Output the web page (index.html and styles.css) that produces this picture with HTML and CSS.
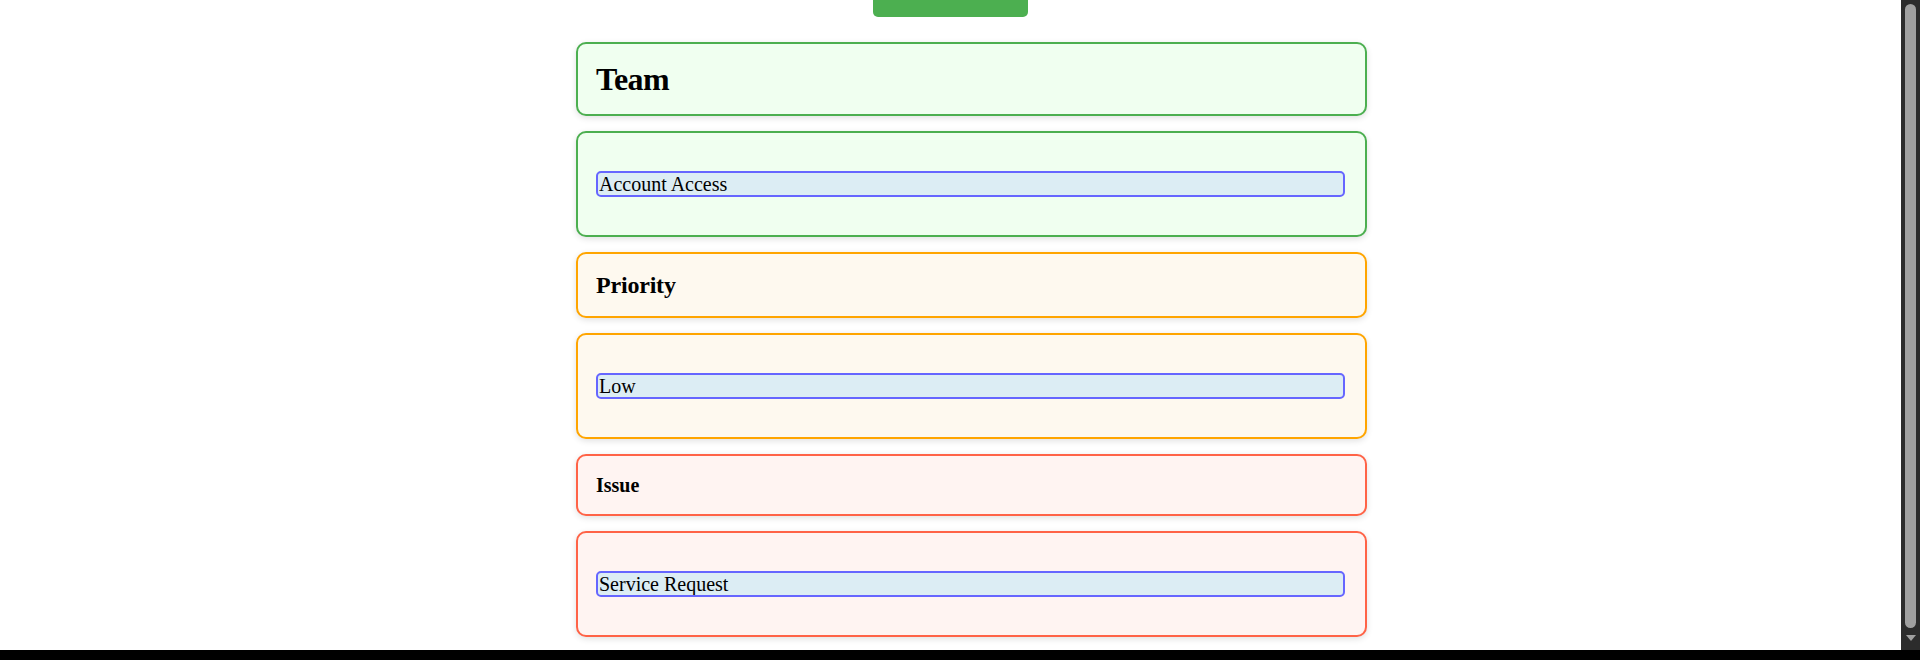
FILE: index.html
```html
<!DOCTYPE html>
<html lang="en">
<head>
<meta charset="utf-8">
<title>Ticket</title>
<link rel="stylesheet" href="styles.css">
</head>
<body>
<div class="screen">
  <div class="viewport">
    <main class="page">
      <div class="actions"><button class="submit" type="button" aria-label="Submit"></button></div>
      <div class="stack">
        <section class="card green"><h1 class="title-1">Team</h1></section>
        <section class="card green field"><input class="value" type="text" value="Account Access"></section>
        <section class="card orange"><h2 class="title-2">Priority</h2></section>
        <section class="card orange field"><input class="value" type="text" value="Low"></section>
        <section class="card red"><h3 class="title-3">Issue</h3></section>
        <section class="card red field"><input class="value" type="text" value="Service Request"></section>
      </div>
    </main>
    <div class="scrollbar">
      <div class="thumb"></div>
      <div class="arrow"></div>
    </div>
  </div>
  <div class="bottom-bar"></div>
</div>
</body>
</html>
```
FILE: styles.css
```css
html, body {
  margin: 0;
  padding: 0;
  height: 100%;
  overflow: hidden;
  background: #ffffff;
  font-family: "Liberation Serif", "Times New Roman", serif;
  color: #000;
}

.screen {
  display: flex;
  flex-direction: column;
  height: 660px;
}

.viewport {
  display: flex;
  height: 650px;
}

.page {
  flex: 1;
  overflow: hidden;
}

.actions {
  display: flex;
  justify-content: center;
}

.submit {
  width: 155px;
  height: 40px;
  margin-top: -23px;
  background: #4caf50;
  border: none;
  border-radius: 5px;
}

.stack {
  display: flex;
  flex-direction: column;
  gap: 15px;
  width: 791px;
  margin-top: 25px;
  margin-left: 576px;
}

.card {
  box-sizing: border-box;
  border: 2px solid;
  border-radius: 10px;
  padding: 19px 18px;
  box-shadow: 0 2px 6px rgba(0, 0, 0, 0.12);
}

.green { background: #f0fff0; border-color: #4caf50; }
.orange { background: #fef9ef; border-color: #ffa500; }
.red { background: #fff4f2; border-color: #ff6347; }

.title-1, .title-2, .title-3 {
  margin: 0;
  line-height: 1;
  font-weight: bold;
}
.title-1 { font-size: 32px; letter-spacing: -0.5px; }
.title-2 { font-size: 24px; letter-spacing: -0.2px; }
.title-3 { font-size: 20px; }

.value {
  display: block;
  box-sizing: border-box;
  width: calc(100% - 2px);
  height: 26px;
  margin: 19px 0;
  padding: 0 1px;
  border: 2px solid #6666ff;
  border-radius: 5px;
  background: #dcedf4;
  font-family: "Liberation Serif", "Times New Roman", serif;
  font-size: 20px;
  color: #000;
  outline: none;
}

.scrollbar {
  width: 19px;
  background: #2c2c2c;
  display: flex;
  flex-direction: column;
  align-items: center;
  padding-top: 4px;
  box-sizing: border-box;
}

.thumb {
  width: 11px;
  height: 624px;
  background: #a0a0a0;
  border-radius: 6px;
}

.arrow {
  margin-top: 7px;
  width: 0;
  height: 0;
  border-left: 5px solid transparent;
  border-right: 5px solid transparent;
  border-top: 6px solid #a0a0a0;
}

.bottom-bar {
  height: 10px;
  background: #000;
}
```
